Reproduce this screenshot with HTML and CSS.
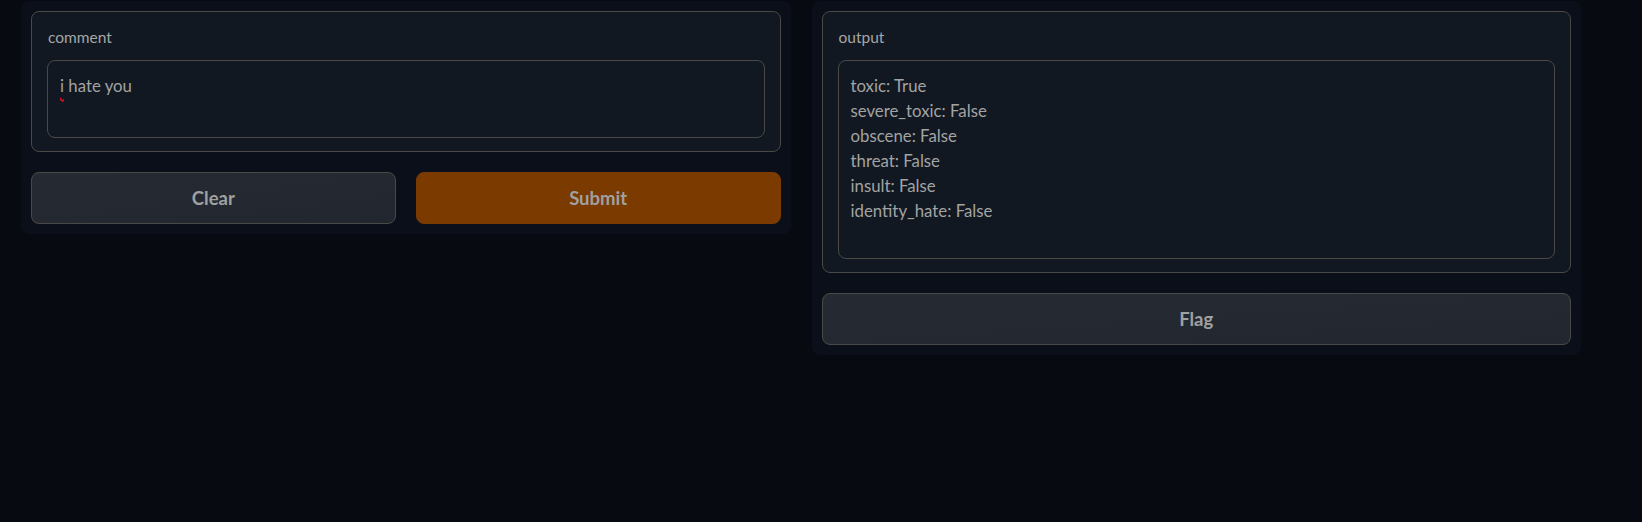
FILE: index.html
```html
<!DOCTYPE html>
<html>
<head>
<meta charset="utf-8">
<link rel="stylesheet" href="styles.css">
</head>
<body>
<div class="app">
  <div class="panel">
    <div class="box">
      <div class="label">comment</div>
      <div class="field field-input"><span class="misspelled">i</span> hate you</div>
    </div>
    <div class="buttons">
      <div class="btn btn-secondary">Clear</div>
      <div class="btn btn-primary">Submit</div>
    </div>
  </div>
  <div class="panel">
    <div class="box">
      <div class="label">output</div>
      <div class="field field-output">
        <div>toxic: True</div>
        <div>severe_toxic: False</div>
        <div>obscene: False</div>
        <div>threat: False</div>
        <div>insult: False</div>
        <div>identity_hate: False</div>
      </div>
    </div>
    <div class="buttons">
      <div class="btn btn-secondary">Flag</div>
    </div>
  </div>
</div>
</body>
</html>
```
FILE: styles.css
```css
html, body {
  margin: 0;
  padding: 0;
  background: #070a10;
  height: 100%;
}
body {
  font-family: "Lato", "Open Sans", sans-serif;
  color: #a3a3a3;
}
.app {
  display: flex;
  align-items: flex-start;
  gap: 21px;
  padding: 1px 0 0 21px;
  width: 1560px;
}
.panel {
  flex: 1;
  background: #0b0f19;
  border-radius: 8px;
  padding: 10px;
  display: flex;
  flex-direction: column;
  gap: 20px;
}
.box {
  background: #111821;
  border: 1px solid #4b4945;
  border-radius: 8px;
  padding: 15px 15px 13px 15px;
  display: flex;
  flex-direction: column;
  gap: 13px;
}
.label {
  font-size: 15.5px;
  line-height: 20px;
  color: #a6a6a6;
  padding-left: 1px;
}
.field {
  border: 1px solid #4b4945;
  border-radius: 8px;
  background: #111821;
  padding: 12px;
  font-size: 16.8px;
  line-height: 25px;
  color: #a3a3a3;
  box-sizing: border-box;
}
.field-input {
  height: 78px;
}
.field-output {
  height: 199px;
}
.misspelled {
  text-decoration: underline wavy #d0101a;
  text-decoration-thickness: 1.5px;
  text-underline-offset: 3px;
}
.buttons {
  display: flex;
  gap: 20px;
}
.btn {
  flex: 1;
  height: 52px;
  box-sizing: border-box;
  border-radius: 8px;
  display: flex;
  align-items: center;
  justify-content: center;
  font-size: 18.5px;
  font-weight: 700;
  color: #a0a0a0;
}
.btn-secondary {
  background: linear-gradient(to bottom right, #262b33, #22272f);
  border: 1px solid #4b4945;
}
.btn-primary {
  background: #7a3a00;
  border: 1px solid #7a3a00;
}
```
